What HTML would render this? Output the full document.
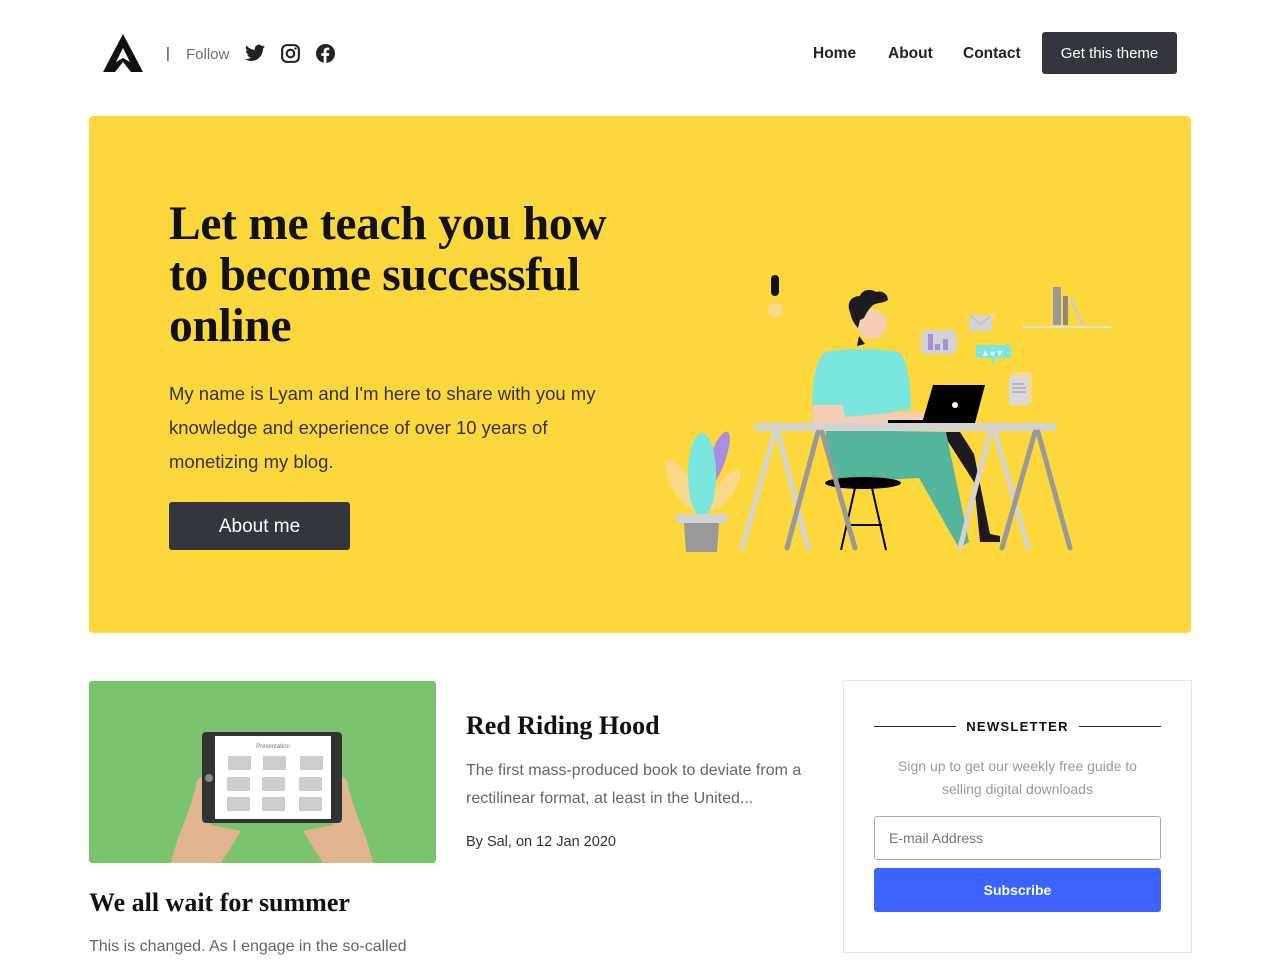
<!DOCTYPE html>
<html><head><meta charset="utf-8"><style>
*{margin:0;padding:0;box-sizing:border-box}
body{width:1280px;height:960px;overflow:hidden;background:#fff;font-family:"Liberation Sans",sans-serif;position:relative;color:#222}
.a{position:absolute;white-space:nowrap}
.serif{font-family:"Liberation Serif",serif;font-weight:bold;color:#111}
</style></head><body>
<svg class="a" style="left:103px;top:34px" width="40" height="38" viewBox="0 0 40 38"><path d="M20 0 L40 38 L28 38 L20 28 L12 38 L0 38 Z M20 14 L13 28 L20 24 L27 28 Z" fill="#111" fill-rule="evenodd"/></svg>
<div class="a" style="left:166px;top:45px;font-size:15px;color:#333">|</div>
<div class="a" style="left:186px;top:46px;font-size:15px;color:#6a6f78">Follow</div>
<svg class="a" style="left:245px;top:44px" width="20" height="18" viewBox="0 0 24 20"><path d="M24 2.4c-.9.4-1.8.7-2.8.8 1-.6 1.8-1.6 2.2-2.7-1 .6-2 1-3.1 1.2A4.9 4.9 0 0 0 11.9 6.2 14 14 0 0 1 1.7 1a4.9 4.9 0 0 0 1.5 6.6c-.8 0-1.6-.3-2.2-.6 0 2.4 1.7 4.4 3.9 4.8-.7.2-1.5.2-2.2.1.6 2 2.4 3.4 4.6 3.4A9.9 9.9 0 0 1 0 17.3 14 14 0 0 0 7.5 19.5c9 0 14-7.5 14-14v-.6c1-.7 1.8-1.6 2.5-2.5z" fill="#222"/></svg>
<svg class="a" style="left:281px;top:44px" width="19" height="19" viewBox="0 0 20 20"><rect x="1.2" y="1.2" width="17.6" height="17.6" rx="5" fill="none" stroke="#222" stroke-width="2.2"/><circle cx="10" cy="10" r="4" fill="none" stroke="#222" stroke-width="2.2"/><circle cx="15.2" cy="4.8" r="1.2" fill="#222"/></svg>
<svg class="a" style="left:316px;top:44px" width="19" height="19" viewBox="0 0 20 20"><circle cx="10" cy="10" r="10" fill="#222"/><path d="M11 20V12.5h2.5l.4-2.9H11V7.8c0-.8.3-1.4 1.4-1.4H14V3.9c-.3 0-1.2-.1-2.2-.1-2.2 0-3.7 1.3-3.7 3.8v2H5.6v2.9h2.5V20z" fill="#fff"/></svg>
<div class="a" style="left:813px;top:45px;font-size:15.5px;font-weight:bold;color:#222">Home</div>
<div class="a" style="left:888px;top:45px;font-size:15.5px;font-weight:bold;color:#222">About</div>
<div class="a" style="left:963px;top:45px;font-size:15.5px;font-weight:bold;color:#222">Contact</div>
<div class="a" style="left:1042px;top:32px;width:135px;height:42px;background:#33373d;border-radius:3px;color:#fff;font-size:15px;text-align:center;line-height:43px">Get this theme</div>

<div class="a" style="left:89px;top:116px;width:1102px;height:517px;background:#fdd83d;border-radius:4px"></div>
<div class="a serif" style="left:169px;top:199px;font-size:47.5px;line-height:51px;letter-spacing:-0.3px">Let me teach you how<br>to become successful<br>online</div>
<div class="a" style="left:169px;top:377px;font-size:18.5px;line-height:34px;color:#333">My name is Lyam and I'm here to share with you my<br>knowledge and experience of over 10 years of<br>monetizing my blog.</div>
<div class="a" style="left:169px;top:502px;width:181px;height:48px;background:#33373d;border-radius:3px;color:#fff;font-size:19px;text-align:center;line-height:49px">About me</div>

<svg class="a" style="left:650px;top:260px" width="480" height="310" viewBox="0 0 480 310">
<rect x="121" y="15" width="8" height="21" rx="4" fill="#111"/><circle cx="125" cy="50" r="7.5" fill="#f8d98a"/>
<line x1="372" y1="67" x2="461" y2="67" stroke="#e0e0e0" stroke-width="2"/>
<rect x="403" y="27" width="8" height="38" fill="#999"/><rect x="413" y="36" width="5" height="29" fill="#888"/><path d="M419 38l3 0 12 27-3 0z" fill="#ccc"/>
<rect x="319" y="55" width="23" height="16" fill="#d3d3d3"/><path d="M319 55l11.5 9 11.5-9" fill="none" stroke="#bbb"/><circle cx="343" cy="55" r="3" fill="#f8d98a"/>
<rect x="271" y="70" width="36" height="24" rx="6" fill="#d3d3d3"/><rect x="278" y="74" width="5" height="16" fill="#a98ee0"/><rect x="285" y="84" width="5" height="6" fill="#a98ee0"/><rect x="293" y="79" width="5" height="11" fill="#a98ee0"/>
<path d="M326 85h35v13h-16l-2 9-2-9h-15z" fill="#7be6de"/><text x="331" y="96" font-size="9" fill="#fff">▲●▼</text>
<rect x="362" y="112" width="20" height="30" fill="#f8d98a"/><rect x="359" y="116" width="20" height="29" fill="#d9d9d9"/><path d="M362 124h12M362 128h14M362 132h14" stroke="#999"/>
<circle cx="222" cy="64" r="15" fill="#f5cdb5"/>
<path d="M200 52c-4-10 2-16 10-16 2-6 10-8 16-4 6-2 12 2 12 8-6 4-12 2-16 6-4 4-6 8-8 12l-4 2-2 8c-4-4-7-10-8-16z" fill="#1f1a1f"/>
<path d="M209 76l6 8-8 2z" fill="#1f1a1f"/>
<path d="M175 92c20-4 50-4 74 0 10 8 12 40 12 57l-70 12-28 0c-2-30 0-58 12-69z" fill="#7be6de"/>
<path d="M163 145l30 0 2 12 70-6 12 4-4 10-80 8-30 0z" fill="#f5cdb5"/>
<path d="M283 125h52l-10 38h-53z" fill="#000"/><circle cx="305" cy="145" r="3" fill="#fff"/><rect x="238" y="160" width="40" height="3" fill="#000"/>
<path d="M292 172l18 0 14 22 16 80 10 2 0 6-20 0-6-60z" fill="#1f1a1f"/>
<path d="M176 170l120 2 23 110-10 6-40-70-80 4c-10-10-14-30-13-52z" fill="#54b59d"/>
<ellipse cx="213" cy="223" rx="38" ry="6" fill="#000"/><path d="M205 228l-14 62M222 228l14 62M197 265l35 0" stroke="#000" stroke-width="2" fill="none"/>
<rect x="104" y="163" width="302" height="8" rx="3" fill="#d3d3d3"/>
<g stroke-width="5" stroke-linecap="round"><line x1="125" y1="172" x2="92" y2="288" stroke="#d3d3d3"/><line x1="128" y1="172" x2="158" y2="288" stroke="#d3d3d3"/><line x1="168" y1="172" x2="137" y2="288" stroke="#999"/><line x1="172" y1="172" x2="205" y2="288" stroke="#999"/>
<line x1="340" y1="172" x2="310" y2="288" stroke="#d3d3d3"/><line x1="345" y1="172" x2="378" y2="288" stroke="#d3d3d3"/><line x1="385" y1="172" x2="352" y2="288" stroke="#999"/><line x1="388" y1="172" x2="420" y2="288" stroke="#999"/></g>
<ellipse cx="67" cy="200" rx="8" ry="30" fill="#a98ee0" transform="rotate(20 67 200)"/>
<ellipse cx="32" cy="225" rx="10" ry="28" fill="#f8d98a" transform="rotate(-30 32 225)"/><ellipse cx="75" cy="230" rx="8" ry="24" fill="#f8d98a" transform="rotate(35 75 230)"/>
<ellipse cx="52" cy="215" rx="14" ry="42" fill="#7be6de"/>
<rect x="26" y="254" width="51" height="9" rx="2" fill="#d3d3d3"/><path d="M34 263h35l-2 29h-31z" fill="#999"/>
</svg>

<div class="a" style="left:89px;top:681px;width:347px;height:182px;background:#7bc46e;border-radius:3px;overflow:hidden">
<svg width="347" height="182" viewBox="0 0 347 182"><path d="M108 100c6-8 10-6 12 4l2 40 30 6-20 32h-50c6-30 20-50 26-82z" fill="#e0b48f"/><path d="M258 100c-6-8-10-6-12 4l-2 40-30 6 20 32h50c-6-30-20-50-26-82z" fill="#e0b48f"/>
<rect x="113" y="51" width="140" height="91" rx="4" fill="#333"/><rect x="126" y="55" width="116" height="83" fill="#fff"/><circle cx="120" cy="97" r="4" fill="#888"/>
<text x="184" y="67" font-size="6" text-anchor="middle" fill="#777" font-family="Liberation Sans">Presentation</text>
<g fill="#ccc"><rect x="139" y="75" width="23" height="14"/><rect x="174" y="75" width="23" height="14"/><rect x="211" y="75" width="23" height="14"/><rect x="138" y="96" width="23" height="14"/><rect x="173" y="96" width="23" height="14"/><rect x="210" y="96" width="23" height="14"/><rect x="138" y="116" width="23" height="14"/><rect x="173" y="116" width="23" height="14"/><rect x="210" y="116" width="23" height="14"/></g></svg></div>
<div class="a serif" style="left:466px;top:711px;font-size:26px">Red Riding Hood</div>
<div class="a" style="left:466px;top:757px;font-size:16px;line-height:28px;color:#666">The first mass-produced book to deviate from a<br>rectilinear format, at least in the United...</div>
<div class="a" style="left:466px;top:834px;font-size:14.5px;color:#333">By Sal, on 12 Jan 2020</div>
<div class="a serif" style="left:89px;top:888px;font-size:26px">We all wait for summer</div>
<div class="a" style="left:89px;top:938px;font-size:16px;color:#666">This is changed. As I engage in the so-called</div>

<div class="a" style="left:843px;top:680px;width:349px;height:273px;border:1px solid #e8e8e8"></div>
<div class="a" style="left:874px;top:726px;width:82px;height:1px;background:#222"></div>
<div class="a" style="left:1079px;top:726px;width:82px;height:1px;background:#222"></div>
<div class="a" style="left:956px;top:719px;width:123px;text-align:center;font-size:13px;font-weight:bold;letter-spacing:1.3px;color:#111">NEWSLETTER</div>
<div class="a" style="left:874px;top:755px;width:287px;text-align:center;font-size:14px;line-height:23px;color:#999;white-space:normal">Sign up to get our weekly free guide to<br>selling digital downloads</div>
<div class="a" style="left:874px;top:816px;width:287px;height:44px;border:1px solid #aaa;border-radius:3px;padding-left:14px;line-height:42px;font-size:14px;color:#777">E-mail Address</div>
<div class="a" style="left:874px;top:868px;width:287px;height:44px;background:#3d63ff;border-radius:3px;text-align:center;line-height:44px;font-size:14px;font-weight:bold;color:#fff">Subscribe</div>
</body></html>
